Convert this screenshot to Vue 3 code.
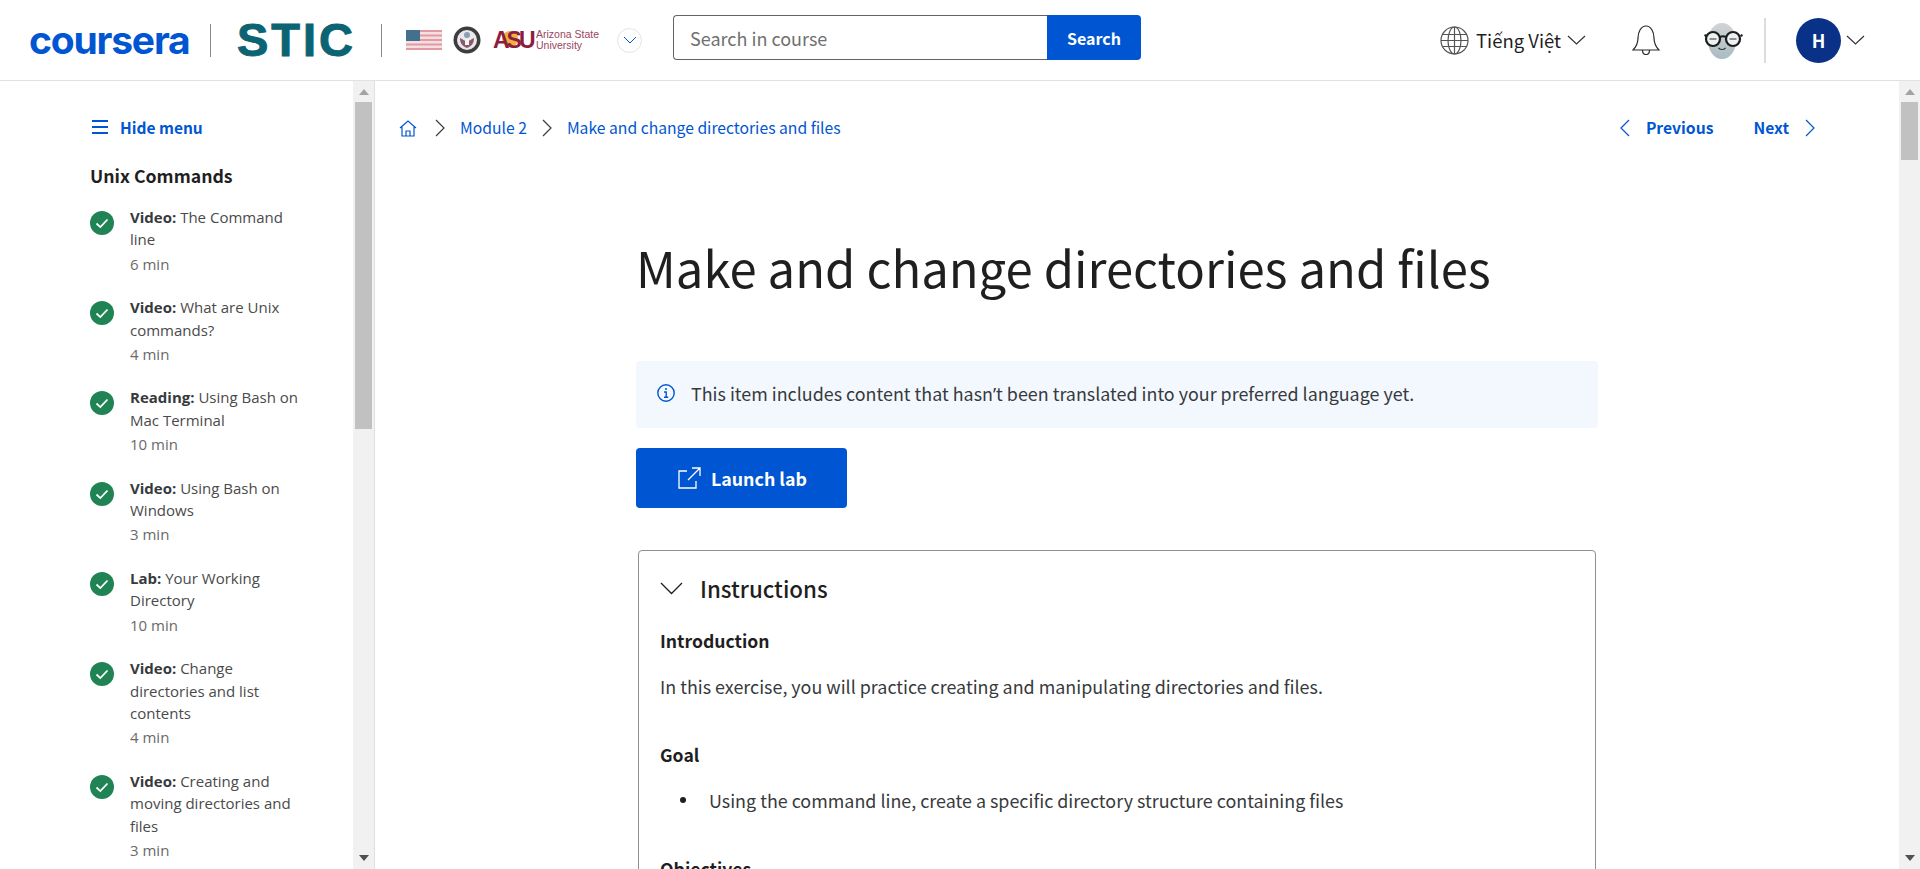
<script setup>
const items = [
  { kind: 'Video:', title: 'The Command line', time: '6 min' },
  { kind: 'Video:', title: 'What are Unix commands?', time: '4 min' },
  { kind: 'Reading:', title: 'Using Bash on Mac Terminal', time: '10 min' },
  { kind: 'Video:', title: 'Using Bash on Windows', time: '3 min' },
  { kind: 'Lab:', title: 'Your Working Directory', time: '10 min' },
  { kind: 'Video:', title: 'Change directories and list contents', time: '4 min' },
  { kind: 'Video:', title: 'Creating and moving directories and files', time: '3 min' }
]
</script>

<template>
  <div class="page">
    <header class="topbar">
      <div class="logo-coursera">coursera</div>
      <span class="vline first"></span>
      <div class="logo-stic">STIC</div>
      <span class="vline second"></span>

      <svg class="flag" width="36" height="20" viewBox="0 0 36 20">
        <rect width="36" height="20" fill="#f4dfe1" />
        <rect y="0" width="36" height="2" fill="#e39aa4" />
        <rect y="4.5" width="36" height="2" fill="#e39aa4" />
        <rect y="9" width="36" height="2" fill="#e39aa4" />
        <rect y="13.5" width="36" height="2" fill="#e39aa4" />
        <rect y="18" width="36" height="2" fill="#e39aa4" />
        <rect width="14" height="11" fill="#44708f" />
      </svg>

      <svg class="seal" width="28" height="28" viewBox="0 0 28 28">
        <circle cx="14" cy="14" r="13.5" fill="#3d3d3d" />
        <circle cx="14" cy="14" r="10" fill="#e9e8ec" />
        <path d="M7 12c3 1 4 3 7 3s4-2 7-3c0 5-2 8-7 10-5-2-7-5-7-10z" fill="#8a5a6a" />
        <circle cx="14" cy="9" r="3" fill="#8f9db3" />
        <rect x="12" y="13" width="4" height="6" fill="#f5f5f5" />
      </svg>

      <div class="asu">
        <span class="asu-sun"></span>
        <span class="asu-mark">ASU</span>
      </div>
      <div class="asu-name">Arizona State<br />University</div>

      <button class="more-logos">
        <svg width="14" height="8" viewBox="0 0 14 8" fill="none" stroke="#0056d2" stroke-width="1">
          <path d="M1 1l6 6 6-6" />
        </svg>
      </button>

      <div class="search">
        <input class="search-input" placeholder="Search in course" />
        <button class="search-btn">Search</button>
      </div>

      <div class="top-right">
        <svg class="globe" width="29" height="29" viewBox="0 0 29 29" fill="none" stroke="#555" stroke-width="1.2">
          <circle cx="14.5" cy="14.5" r="13.5" />
          <ellipse cx="14.5" cy="14.5" rx="6.5" ry="13.5" />
          <path d="M14.5 1v27M2.5 8.5h24M1 14.5h27M2.5 20.5h24" />
        </svg>
        <span class="lang">Tiếng Việt</span>
        <svg class="chev-down" width="19" height="10" viewBox="0 0 19 10" fill="none" stroke="#333" stroke-width="1.2">
          <path d="M1 1l8.5 8L18 1" />
        </svg>

        <svg class="bell" width="28" height="30" viewBox="0 0 28 30" fill="none" stroke="#2a2a2a" stroke-width="1.2">
          <path d="M1 25c3-3 5-6 5-12 0-6 3-12 8-12s8 6 8 12c0 6 2 9 5 12z" />
          <path d="M10.5 25c0 3 1.5 4.5 3.5 4.5s3.500-1.500 3.500-4.500" />
        </svg>

        <svg class="coach" width="39" height="36" viewBox="0 0 39 36">
          <defs>
            <linearGradient id="coachHead" x1="0" y1="0" x2="0" y2="1">
              <stop offset="0" stop-color="#d2d4d4" />
              <stop offset="1" stop-color="#a8bcc2" />
            </linearGradient>
          </defs>
          <ellipse cx="18" cy="18" rx="14" ry="18" fill="url(#coachHead)" />
          <g fill="#eef2f2" stroke="#1d1d1d" stroke-width="2.2">
            <circle cx="9" cy="16" r="7" />
            <circle cx="29" cy="16" r="7" />
          </g>
          <path d="M0.500 12l2 1M38.500 12l-2 1M16 14c2-1 4-1 6 0" stroke="#1d1d1d" stroke-width="2" fill="none" />
          <path d="M5.500 16h7M25.500 16h7" stroke="#333" stroke-width="1.2" fill="none" />
          <path d="M14.500 25c2 2 5 2 7 0" stroke="#333" stroke-width="1.2" fill="none" />
        </svg>

        <span class="vline tall"></span>
        <div class="user">H</div>
        <svg class="chev-down last" width="19" height="10" viewBox="0 0 19 10" fill="none" stroke="#333" stroke-width="1.2">
          <path d="M1 1l8.5 8L18 1" />
        </svg>
      </div>
    </header>

    <div class="body">
      <aside class="sidebar">
        <div class="side-content">
          <a class="hide-menu">
            <svg width="16" height="15" viewBox="0 0 16 15" fill="#0056d2">
              <rect y="0" width="16" height="2" />
              <rect y="6" width="16" height="2" />
              <rect y="12" width="16" height="2" />
            </svg>
            Hide menu
          </a>
          <h2 class="side-title">Unix Commands</h2>
          <ul class="side-list">
            <li v-for="item in items" :key="item.title" class="side-item">
              <svg class="done" width="24" height="24" viewBox="0 0 24 24">
                <circle cx="12" cy="12" r="12" fill="#1f8354" />
                <path d="M6.5 12.5l3.8 3.6 7.2-7.6" fill="none" stroke="#fff" stroke-width="1.8" />
              </svg>
              <div class="item-text">
                <div class="item-title"><b>{{ item.kind }}</b> {{ item.title }}</div>
                <div class="item-time">{{ item.time }}</div>
              </div>
            </li>
          </ul>
        </div>
        <div class="scrollbar with-border">
          <span class="arrow up"></span>
          <span class="thumb side-thumb"></span>
          <span class="arrow down"></span>
        </div>
      </aside>

      <main class="main">
        <div class="main-content">
          <nav class="crumbs">
            <div class="crumb-left">
              <svg width="18" height="17" viewBox="0 0 18 17" fill="none" stroke="#0056d2" stroke-width="1.2">
                <path d="M1 8L9 1l8 7M3 7v9h12V7M7 16v-5h4v5" />
              </svg>
              <svg class="crumb-sep home-sep" width="10" height="18" viewBox="0 0 10 18" fill="none" stroke="#3b3b3b" stroke-width="1.2">
                <path d="M1 1l8 8-8 8" />
              </svg>
              <a class="crumb">Module 2</a>
              <svg class="crumb-sep" width="10" height="18" viewBox="0 0 10 18" fill="none" stroke="#3b3b3b" stroke-width="1.2">
                <path d="M1 1l8 8-8 8" />
              </svg>
              <a class="crumb">Make and change directories and files</a>
            </div>
            <div class="pager">
              <a class="pager-link">
                <svg width="10" height="18" viewBox="0 0 10 18" fill="none" stroke="#0056d2" stroke-width="1.2">
                  <path d="M9 1L1 9l8 8" />
                </svg>
                Previous
              </a>
              <a class="pager-link">
                Next
                <svg width="10" height="18" viewBox="0 0 10 18" fill="none" stroke="#0056d2" stroke-width="1.2">
                  <path d="M1 1l8 8-8 8" />
                </svg>
              </a>
            </div>
          </nav>

          <div class="article">
            <h1 class="headline">Make and change directories and files</h1>

            <div class="notice">
              <svg width="18" height="18" viewBox="0 0 18 18" fill="none" stroke="#0056d2" stroke-width="1.4">
                <circle cx="9" cy="9" r="8.2" />
                <path d="M7 8h2.2v5M7 13.2h4.2" />
                <circle cx="9" cy="5" r="1" fill="#0056d2" stroke="none" />
              </svg>
              <span>This item includes content that hasn<span class="apos">’</span>t been translated into your preferred language yet.</span>
            </div>

            <button class="launch">
              <svg width="23" height="22" viewBox="0 0 23 22" fill="none" stroke="#fff" stroke-width="1.3">
                <path d="M9 4H1v17h17v-7" />
                <path d="M10 13L22 1M14 1h8v8" />
              </svg>
              Launch lab
            </button>

            <section class="card">
              <div class="card-head">
                <svg width="23" height="13" viewBox="0 0 23 13" fill="none" stroke="#1f1f1f" stroke-width="1.3">
                  <path d="M1 1l10.500 10.500L22 1" />
                </svg>
                <span>Instructions</span>
              </div>
              <h3 class="card-h">Introduction</h3>
              <p class="card-p">In this exercise, you will practice creating and manipulating directories and files.</p>
              <h3 class="card-h goal">Goal</h3>
              <ul class="card-ul">
                <li>Using the command line, create a specific directory structure containing files</li>
              </ul>
              <h3 class="card-h objectives">Objectives</h3>
            </section>
          </div>
        </div>
        <div class="scrollbar">
          <span class="arrow up"></span>
          <span class="thumb main-thumb"></span>
          <span class="arrow down"></span>
        </div>
      </main>
    </div>
  </div>
</template>

<style>
html, body {
  margin: 0;
  overflow: hidden;
  background: #fff;
}
</style>

<style scoped>
.page {
  height: 869px;
  display: flex;
  flex-direction: column;
  overflow: hidden;
  font-family: "Noto Sans CJK SC", "Liberation Sans", sans-serif;
  color: #1f1f1f;
}

.topbar {
  flex: none;
  height: 80px;
  display: flex;
  align-items: center;
  padding-left: 29px;
  border-bottom: 1px solid #e1e1e1;
  background: #fff;
}

.logo-coursera {
  flex: none;
  width: 160px;
  font-family: "Inter", "Liberation Sans", sans-serif;
  font-size: 39px;
  font-weight: 700;
  letter-spacing: -1.200px;
  line-height: 40px;
  color: #0056d2;
}

.vline {
  flex: none;
  width: 1px;
  height: 33px;
  background: #8a8a8a;
}

.vline.first {
  margin-left: 21px;
}

.logo-stic {
  flex: none;
  width: 118px;
  margin-left: 26px;
  font-family: "Liberation Sans", sans-serif;
  font-size: 47px;
  font-weight: 700;
  letter-spacing: 3px;
  line-height: 46px;
  color: #0b6373;
  -webkit-text-stroke: 1px #0b6373;
}

.vline.second {
  margin-left: 26px;
}

.flag {
  margin-left: 24px;
  filter: blur(0.3px);
}

.seal {
  margin-left: 11px;
  filter: blur(0.3px);
}

.asu {
  position: relative;
  width: 38px;
  height: 18px;
  margin-left: 12px;
}

.asu-sun {
  position: absolute;
  left: 9px;
  top: 0;
  width: 16px;
  height: 16px;
  border-radius: 50%;
  background: #f0b03c;
}

.asu-mark {
  position: relative;
  display: block;
  font-family: "Liberation Sans", sans-serif;
  font-size: 23px;
  font-weight: 700;
  letter-spacing: -3px;
  line-height: 18px;
  color: #8c1d40;
}

.asu-name {
  width: 64px;
  margin-left: 5px;
  font-family: "Liberation Sans", sans-serif;
  font-size: 10.500px;
  line-height: 11px;
  color: #9b4560;
  white-space: nowrap;
}

.more-logos {
  flex: none;
  width: 25px;
  height: 25px;
  margin-left: 17px;
  padding: 0;
  border: 1px solid #e4e4e4;
  border-radius: 50%;
  background: #fff;
  display: flex;
  align-items: center;
  justify-content: center;
}

.search {
  display: flex;
  height: 45px;
  margin-left: 31px;
  margin-bottom: 5px;
}

.search-input {
  width: 374px;
  box-sizing: border-box;
  padding: 0 16px;
  border: 1px solid #636363;
  border-right: 0;
  border-radius: 4px 0 0 4px;
  outline: none;
  font: inherit;
  font-size: 18px;
  color: #333;
}

.search-input::placeholder {
  color: #707070;
  opacity: 1;
}

.search-btn {
  width: 94px;
  border: 0;
  border-radius: 0 4px 4px 0;
  background: #0056d2;
  color: #fff;
  font: inherit;
  font-size: 16px;
  font-weight: 700;
}

.top-right {
  display: flex;
  align-items: center;
  margin-left: auto;
  padding-right: 55px;
}

.lang {
  margin-left: 7px;
  font-size: 18.500px;
  line-height: 24px;
  color: #1f1f1f;
}

.chev-down {
  margin-left: 6px;
}

.chev-down.last {
  margin-left: 5px;
}

.bell {
  margin-left: 46px;
}

.coach {
  margin-left: 44px;
  margin-top: 2px;
}

.vline.tall {
  width: 2px;
  height: 45px;
  margin-left: 21px;
  background: #dcdcdc;
}

.user {
  flex: none;
  width: 45px;
  height: 45px;
  margin-left: 30px;
  border-radius: 50%;
  background: #0a3188;
  color: #fff;
  font-size: 18px;
  font-weight: 700;
  line-height: 45px;
  text-align: center;
}

.body {
  flex: 1;
  min-height: 0;
  display: flex;
}

.sidebar {
  flex: none;
  width: 375px;
  display: flex;
  overflow: hidden;
}

.side-content {
  flex: 1;
  min-width: 0;
  padding: 35px 0 0 90px;
  overflow: hidden;
}

.hide-menu {
  display: flex;
  align-items: center;
  gap: 12px;
  margin-left: 2px;
  font-size: 15.500px;
  font-weight: 600;
  line-height: 22px;
  color: #0056d2;
}

.side-title {
  margin: 25px 0 0;
  font-size: 17.700px;
  font-weight: 600;
  line-height: 24px;
  color: #1f1f1f;
}

.side-list {
  margin: 19px 0 0;
  padding: 0;
  list-style: none;
}

.side-item {
  display: flex;
  gap: 16px;
  padding-bottom: 21px;
}

.done {
  flex: none;
  margin-top: 5px;
}

.item-text {
  width: 172px;
  font-family: "Open Sans", "Liberation Sans", sans-serif;
  font-size: 15px;
  line-height: 22.400px;
  color: #4a4a4a;
}

.item-title b {
  font-weight: 700;
  color: #373a3c;
}

.item-time {
  margin-top: 2px;
  color: #6a6a6a;
}

.scrollbar {
  flex: none;
  width: 21px;
  box-sizing: border-box;
  padding: 0 2px;
  display: flex;
  flex-direction: column;
  align-items: center;
  background: #f1f1f1;
}

.scrollbar.with-border {
  width: 22px;
  border-right: 1px solid #e0e0e0;
}

.arrow {
  flex: none;
  width: 0;
  height: 0;
  border-left: 5px solid transparent;
  border-right: 5px solid transparent;
}

.arrow.up {
  margin-top: 8px;
  margin-bottom: 7px;
  border-bottom: 6px solid #a3a3a3;
}

.arrow.down {
  margin-top: auto;
  margin-bottom: 8px;
  border-top: 6px solid #505050;
}

.thumb {
  flex: none;
  width: 100%;
  background: #c1c1c1;
}

.side-thumb {
  height: 327px;
}

.main-thumb {
  height: 58px;
}

.main {
  flex: 1;
  min-width: 0;
  display: flex;
}

.main-content {
  flex: 1;
  min-width: 0;
  overflow: hidden;
}

.crumbs {
  display: flex;
  justify-content: space-between;
  align-items: center;
  height: 22px;
  margin-top: 36px;
  padding: 0 84px 0 24px;
}

.crumb-left {
  display: flex;
  align-items: center;
}

.crumb-sep {
  margin: 0 15px 0 15px;
}

.crumb-sep.home-sep {
  margin-left: 18px;
}

.crumb {
  font-size: 15.700px;
  line-height: 22px;
  color: #0056d2;
}

.pager {
  display: flex;
  gap: 40px;
}

.pager-link {
  display: flex;
  align-items: center;
  gap: 16px;
  font-size: 15.700px;
  font-weight: 600;
  line-height: 22px;
  color: #0056d2;
}

.article {
  width: 962px;
  margin-left: 261px;
}

.headline {
  margin: 98px 0 0;
  font-size: 49px;
  font-weight: 400;
  line-height: 60px;
  color: #1f1f1f;
}

.notice {
  display: flex;
  align-items: center;
  gap: 16px;
  box-sizing: border-box;
  height: 67px;
  margin-top: 64px;
  padding: 0 0 3px 21px;
  border-radius: 4px;
  background: #f3f8ff;
  font-size: 17.900px;
  color: #373a3c;
}

.apos {
  font-family: "Noto Sans", sans-serif;
}

.launch {
  display: flex;
  align-items: center;
  gap: 10px;
  width: 211px;
  height: 60px;
  margin-top: 20px;
  padding: 0 0 0 42px;
  border: 0;
  border-radius: 4px;
  background: #0056d2;
  color: #fff;
  font: inherit;
  font-size: 17.800px;
  font-weight: 700;
}

.card {
  width: 958px;
  margin: 42px 0 0 2px;
  padding: 0 21px 20px;
  box-sizing: border-box;
  border: 1px solid #8f8f8f;
  border-radius: 4px;
}

.card-head {
  display: flex;
  align-items: center;
  gap: 17px;
  height: 36px;
  margin-top: 19px;
  font-size: 22.300px;
  font-weight: 500;
  line-height: 36px;
  color: #1f1f1f;
}

.card-h {
  margin: 23px 0 0;
  font-size: 17.600px;
  font-weight: 700;
  line-height: 24px;
  color: #1f1f1f;
}

.card-p {
  margin: 21px 0 0;
  font-size: 17.900px;
  line-height: 24px;
  color: #373a3c;
}

.card-h.goal {
  margin-top: 45px;
}

.card-ul {
  margin: 21px 0 0;
  padding: 0;
  list-style: none;
  font-size: 17.900px;
  line-height: 24px;
  color: #373a3c;
}

.card-ul li {
  display: flex;
  align-items: center;
  gap: 23px;
  padding-left: 20px;
}

.card-ul li::before {
  content: "";
  flex: none;
  width: 6px;
  height: 6px;
  border-radius: 50%;
  background: #1f1f1f;
}

.card-h.objectives {
  margin-top: 45px;
}
</style>
